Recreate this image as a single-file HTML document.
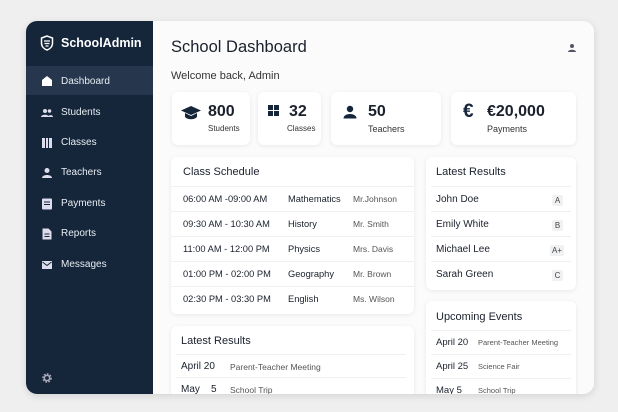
<!DOCTYPE html>
<html><head><style>
*{margin:0;padding:0;box-sizing:border-box}
body{width:618px;height:412px;background:#efefef;font-family:"Liberation Sans",sans-serif;position:relative;overflow:hidden;color:#1a202c}
.frame{position:absolute;left:26px;top:21px;width:568px;height:373px;border-radius:11px;overflow:hidden;background:#f8f9fa;box-shadow:0 2px 8px rgba(0,0,0,.12)}
.side{position:absolute;left:0;top:0;width:127px;height:373px;background:#15253a}
.a{position:absolute}
.nav{position:absolute;left:0;width:127px;height:24px;color:#e8edf3;font-size:10px;line-height:24px;padding-left:35px}
.nav svg{position:absolute;left:15px;top:6px}
.card{position:absolute;background:#fff;border-radius:6px;box-shadow:0 1px 4px rgba(0,0,0,.08)}
.t{position:absolute;white-space:nowrap}
.hr{position:absolute;height:1px;background:#eef0f2}
.g{position:absolute;width:11px;height:11px;background:#f0f1f3;font-size:8px;line-height:11px;text-align:center;color:#444;border-radius:2px}
</style></head><body>
<div class="frame">
<div class="side">
<svg class="a" style="left:14px;top:14px" width="14" height="16" viewBox="0 0 14 16"><path d="M7 1L1.5 3v5c0 3.5 2.5 6 5.5 7 3-1 5.5-3.5 5.5-7V3z" fill="none" stroke="#fff" stroke-width="1.5"/><path d="M4 6h6M4.5 8.5h5M5.5 11h3" stroke="#fff" stroke-width="1.2"/></svg>
<div class="t" style="left:35px;top:15px;color:#fff;font-size:12.5px;font-weight:bold">SchoolAdmin</div>
<div class="nav" style="top:45px;height:29px;line-height:31px;background:#26374d"><svg style="top:9px" width="12" height="12" viewBox="0 0 12 12"><path d="M6 1L1 5v6h10V5z" fill="#fff"/></svg>Dashboard</div>
<div class="nav" style="top:80px"><svg width="12" height="12" viewBox="0 0 12 12"><circle cx="4" cy="4" r="2" fill="#dde"/><circle cx="8.5" cy="4" r="1.8" fill="#dde"/><path d="M0 10c0-3 8-3 8 0zM7 10c0-2 5-3 5 0z" fill="#dde"/></svg>Students</div>
<div class="nav" style="top:110px"><svg width="12" height="12" viewBox="0 0 12 12"><path d="M1 1h3v10H1zM5 1h2v10H5zM8 1h3v10H8z" fill="#dde"/></svg>Classes</div>
<div class="nav" style="top:140px"><svg width="12" height="12" viewBox="0 0 12 12"><circle cx="6" cy="3.5" r="2.5" fill="#dde"/><path d="M1 11c0-4 10-4 10 0z" fill="#dde"/></svg>Teachers</div>
<div class="nav" style="top:171px"><svg width="12" height="12" viewBox="0 0 12 12"><rect x="1" y="0.5" width="10" height="11" rx="1" fill="#dde"/><path d="M3 4h6M3 6.5h6" stroke="#15253a"/></svg>Payments</div>
<div class="nav" style="top:201px"><svg width="12" height="12" viewBox="0 0 12 12"><path d="M1.5 0.5h6l3 3v8h-9z" fill="#dde"/><path d="M3.5 6h5M3.5 8.5h5" stroke="#15253a"/></svg>Reports</div>
<div class="nav" style="top:232px"><svg width="12" height="12" viewBox="0 0 12 12"><rect x="1" y="2" width="10" height="8" fill="#dde"/><path d="M1.5 3l4.5 3.5 4.5-3.5" stroke="#15253a" fill="none"/></svg>Messages</div>
<svg class="a" style="left:15px;top:351px" width="12" height="12" viewBox="0 0 12 12"><circle cx="6" cy="6" r="3.5" fill="none" stroke="#aab" stroke-width="2.5" stroke-dasharray="1.6 1.1"/><circle cx="6" cy="6" r="2.6" fill="none" stroke="#aab" stroke-width="1.4"/></svg>
</div>
<div class="a" style="left:127px;top:0;width:441px;height:373px;background:#fbfbfc"></div>
<div class="t" style="left:145px;top:17px;font-size:16.5px;font-weight:500">School Dashboard</div>
<svg class="a" style="left:541px;top:22px" width="10" height="10" viewBox="0 0 10 10"><circle cx="5" cy="3" r="2" fill="#556"/><path d="M1 9c0-3 8-3 8 0z" fill="#556"/></svg>
<div class="t" style="left:145px;top:49px;font-size:11px;color:#333">Welcome back, Admin</div>

<div class="card" style="left:146px;top:71px;width:78px;height:53px"></div>
<svg class="a" style="left:154px;top:84px" width="22" height="16" viewBox="0 0 22 16"><path d="M11 1L1 5.5l10 4.5 10-4.5z" fill="#15253a"/><path d="M5 8v4c3 3 9 3 12 0V8l-6 3z" fill="#15253a"/></svg>
<div class="t" style="left:182px;top:82px;font-size:16px;font-weight:bold">800</div>
<div class="t" style="left:182px;top:103px;font-size:8px;color:#333">Students</div>
<div class="card" style="left:232px;top:71px;width:63px;height:53px"></div>
<svg class="a" style="left:242px;top:84px" width="11" height="11" viewBox="0 0 11 11"><path d="M0 0h5v5H0zM6 0h5v5H6zM0 6h5v5H0zM6 6h5v5H6z" fill="#15253a"/></svg>
<div class="t" style="left:263px;top:82px;font-size:16px;font-weight:bold">32</div>
<div class="t" style="left:261px;top:103px;font-size:8px;color:#333">Classes</div>
<div class="card" style="left:305px;top:71px;width:110px;height:53px"></div>
<svg class="a" style="left:317px;top:84px" width="14" height="14" viewBox="0 0 14 14"><circle cx="7" cy="4" r="3.2" fill="#15253a"/><path d="M0.5 13.5c0-6 13-6 13 0z" fill="#15253a"/></svg>
<div class="t" style="left:342px;top:82px;font-size:16px;font-weight:bold">50</div>
<div class="t" style="left:342px;top:103px;font-size:9px;color:#333">Teachers</div>
<div class="card" style="left:425px;top:71px;width:125px;height:53px"></div>
<div class="t" style="left:437px;top:80px;font-size:19px;font-weight:bold;color:#15253a">€</div>
<div class="t" style="left:461px;top:82px;font-size:16px;font-weight:bold">€20,000</div>
<div class="t" style="left:461px;top:103px;font-size:9px;color:#333">Payments</div>

<div class="card" style="left:145px;top:136px;width:243px;height:157px"></div>
<div class="t" style="left:157px;top:145px;font-size:11px;font-weight:500">Class Schedule</div>
<div class="hr" style="left:145px;top:165px;width:243px"></div>
<div class="a" style="left:157px;top:166px;font-size:9.3px;line-height:25px;width:230px">
<div style="position:relative;height:25px"><span class="t" style="left:0">06:00 AM -09:00 AM</span><span class="t" style="left:105px">Mathematics</span><span class="t" style="left:170px;color:#555;font-size:8.5px">Mr.Johnson</span></div>
<div style="position:relative;height:25px"><span class="t" style="left:0">09:30 AM - 10:30 AM</span><span class="t" style="left:105px">History</span><span class="t" style="left:170px;color:#555;font-size:8.5px">Mr. Smith</span></div>
<div style="position:relative;height:25px"><span class="t" style="left:0">11:00 AM - 12:00 PM</span><span class="t" style="left:105px">Physics</span><span class="t" style="left:170px;color:#555;font-size:8.5px">Mrs. Davis</span></div>
<div style="position:relative;height:25px"><span class="t" style="left:0">01:00 PM - 02:00 PM</span><span class="t" style="left:105px">Geography</span><span class="t" style="left:170px;color:#555;font-size:8.5px">Mr. Brown</span></div>
<div style="position:relative;height:25px"><span class="t" style="left:0">02:30 PM - 03:30 PM</span><span class="t" style="left:105px">English</span><span class="t" style="left:170px;color:#555;font-size:8.5px">Ms. Wilson</span></div>
</div>
<div class="hr" style="left:145px;top:190px;width:243px"></div>
<div class="hr" style="left:145px;top:215px;width:243px"></div>
<div class="hr" style="left:145px;top:240px;width:243px"></div>
<div class="hr" style="left:145px;top:265px;width:243px"></div>

<div class="card" style="left:400px;top:136px;width:150px;height:133px"></div>
<div class="t" style="left:410px;top:145px;font-size:11px;font-weight:500">Latest Results</div>
<div class="hr" style="left:405px;top:165px;width:140px"></div>
<div class="t" style="left:410px;top:173px;font-size:10px">John Doe</div><div class="g" style="left:526px;top:174px">A</div>
<div class="hr" style="left:405px;top:190px;width:140px"></div>
<div class="t" style="left:410px;top:198px;font-size:10px">Emily White</div><div class="g" style="left:526px;top:199px">B</div>
<div class="hr" style="left:405px;top:215px;width:140px"></div>
<div class="t" style="left:410px;top:223px;font-size:10px">Michael Lee</div><div class="g" style="left:524px;top:224px;width:14px">A+</div>
<div class="hr" style="left:405px;top:240px;width:140px"></div>
<div class="t" style="left:410px;top:248px;font-size:10px">Sarah Green</div><div class="g" style="left:526px;top:249px">C</div>

<div class="card" style="left:145px;top:305px;width:243px;height:80px"></div>
<div class="t" style="left:155px;top:314px;font-size:11px;font-weight:500">Latest Results</div>
<div class="hr" style="left:150px;top:333px;width:230px"></div>
<div class="t" style="left:155px;top:340px;font-size:10px">April 20</div><div class="t" style="left:204px;top:341px;font-size:8.5px;color:#555">Parent-Teacher Meeting</div>
<div class="hr" style="left:150px;top:356px;width:230px"></div>
<div class="t" style="left:155px;top:363px;font-size:10px">May&nbsp;&nbsp;&nbsp;&nbsp;5</div><div class="t" style="left:204px;top:364px;font-size:8.5px;color:#555">School Trip</div>

<div class="card" style="left:400px;top:280px;width:150px;height:100px"></div>
<div class="t" style="left:410px;top:290px;font-size:11px;font-weight:500">Upcoming Events</div>
<div class="hr" style="left:405px;top:309px;width:140px"></div>
<div class="t" style="left:410px;top:316px;font-size:9.5px">April 20</div><div class="t" style="left:452px;top:317px;font-size:7.5px;color:#555">Parent-Teacher Meeting</div>
<div class="hr" style="left:405px;top:333px;width:140px"></div>
<div class="t" style="left:410px;top:340px;font-size:9.5px">April 25</div><div class="t" style="left:452px;top:341px;font-size:7.5px;color:#555">Science Fair</div>
<div class="hr" style="left:405px;top:357px;width:140px"></div>
<div class="t" style="left:410px;top:364px;font-size:9.5px">May 5</div><div class="t" style="left:452px;top:365px;font-size:7.5px;color:#555">School Trip</div>
</div>
</body></html>
